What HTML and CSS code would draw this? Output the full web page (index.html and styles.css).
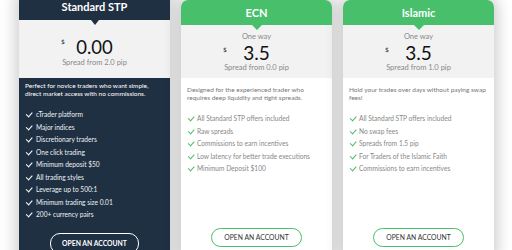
FILE: index.html
```html
<!DOCTYPE html>
<html lang="en">
<head>
    <meta charset="UTF-8">
    <meta name="viewport" content="width=device-width, initial-scale=1.0">
    <title>Account types</title>
    <link rel="stylesheet" href="styles.css">
</head>
<body>

    <div id="plans">

        <!-- featured plan -->
        <div class="plan featured">
            <div class="plan-head">Standard STP</div>
            <div class="plan-price">
                <div class="price">
                    <span class="currency">$</span>
                    <span class="amount">0.00</span>
                </div>
                <div class="spread">Spread from 2.0 pip</div>
            </div>
            <div class="plan-body">
                <p class="desc">Perfect for novice traders who want simple, direct market access with no commissions.</p>
                <ul class="features">
                    <li>cTrader platform</li>
                    <li>Major indices</li>
                    <li>Discretionary traders</li>
                    <li>One click trading</li>
                    <li>Minimum deposit $50</li>
                    <li>All trading styles</li>
                    <li>Leverage up to 500:1</li>
                    <li>Minimum trading size 0.01</li>
                    <li>200+ currency pairs</li>
                </ul>
                <a class="open-btn" href="#">OPEN AN ACCOUNT</a>
            </div>
        </div>

        <div class="plan">
            <div class="plan-head">ECN</div>
            <div class="plan-price">
                <div class="way">One way</div>
                <div class="price">
                    <span class="currency">$</span>
                    <span class="amount">3.5</span>
                </div>
                <div class="spread">Spread from 0.0 pip</div>
            </div>
            <div class="plan-body">
                <p class="desc">Designed for the experienced trader who requires deep liquidity and tight spreads.</p>
                <ul class="features">
                    <li>All Standard STP offers included</li>
                    <li>Raw spreads</li>
                    <li>Commissions to earn incentives</li>
                    <li>Low latency for better trade executions</li>
                    <li>Minimum Deposit $100</li>
                </ul>
                <a class="open-btn" href="#">OPEN AN ACCOUNT</a>
            </div>
        </div>

        <div class="plan">
            <div class="plan-head">Islamic</div>
            <div class="plan-price">
                <div class="way">One way</div>
                <div class="price">
                    <span class="currency">$</span>
                    <span class="amount">3.5</span>
                </div>
                <div class="spread">Spread from 1.0 pip</div>
            </div>
            <div class="plan-body">
                <p class="desc">Hold your trades over days without paying swap fees!</p>
                <ul class="features">
                    <li>All Standard STP offers included</li>
                    <li>No swap fees</li>
                    <li>Spreads from 1.5 pip</li>
                    <li>For Traders of the Islamic Faith</li>
                    <li>Commissions to earn incentives</li>
                </ul>
                <a class="open-btn" href="#">OPEN AN ACCOUNT</a>
            </div>
        </div>

    </div>

</body>
</html>
```

FILE: styles.css
```css
* {
    margin: 0px;
    padding: 0px;
    box-sizing: border-box;
}
html, body {
    width: 100%;
    height: 250px;
    overflow: hidden;
    background-color: white;
    font-family: 'Lato', sans-serif;
}
ul {
    list-style-type: none;
}
#plans {
    display: flex;
    align-items: flex-start;
    gap: 11px;
    padding-left: 19px;
}
.plan {
    width: 151px;
    background-color: white;
    box-shadow: 0 0 14px 4px rgba(0, 0, 0, 0.19);
    border-radius: 7px 7px 0 0;
    overflow: hidden;
}
.plan-head {
    position: relative;
    height: 25px;
    padding-top: 1px;
    line-height: 24px;
    background-color: #47bf6b;
    color: white;
    font-weight: bold;
    font-size: 11px;
    text-align: center;
}
.plan-head::after {
    content: '';
    position: absolute;
    left: 50%;
    bottom: -5px;
    margin-left: -5px;
    border-left: 5px solid transparent;
    border-right: 5px solid transparent;
    border-top: 5px solid #47bf6b;
    z-index: 1;
}
.plan-price {
    height: 53px;
    background-color: #f2f2f2;
    padding-top: 6px;
    text-align: center;
    color: #888;
    font-size: 7.5px;
}
.way {
    line-height: 11px;
}
.price {
    display: grid;
    grid-template-columns: 8px 1fr 8px;
    width: 67px;
    margin: 0 auto;
    height: 21px;
}
.currency {
    color: #222;
    font-size: 6.5px;
    line-height: 8px;
    padding-top: 4px;
    text-align: left;
}
.amount {
    color: #111;
    font-size: 19px;
    line-height: 21px;
}
.spread {
    line-height: 10px;
}
.plan-body {
    height: 177px;
    padding: 8px 6px 8px 6px;
    display: flex;
    flex-direction: column;
}
.desc {
    font-size: 6.5px;
    line-height: 8px;
    color: #777;
}
.features {
    margin-top: 10px;
}
.features li {
    line-height: 12.5px;
    font-size: 6.6px;
    color: #888;
    padding-left: 10px;
    position: relative;
}
.features li::before {
    content: '';
    position: absolute;
    left: 1px;
    top: 4px;
    width: 5px;
    height: 2.5px;
    border-left: 1.2px solid #4cbf6c;
    border-bottom: 1.2px solid #4cbf6c;
    transform: rotate(-48deg);
}
.open-btn {
    display: block;
    margin: auto auto 0 auto;
    width: 91px;
    height: 19px;
    line-height: 17px;
    border: 1px solid #47bf6b;
    border-radius: 10px;
    text-align: center;
    color: #333;
    font-size: 6.8px;
    text-decoration: none;
}

/* featured (dark) plan */
.featured {
    margin-top: -5px;
    border-radius: 0;
    background-color: #1f3043;
}
.featured .plan-head {
    background-color: #1f3043;
    padding-top: 0px;
}
.featured .plan-head::after {
    margin-left: -4px;
    border-left-width: 4px;
    border-right-width: 4px;
    border-top-color: #1f3043;
}
.featured .plan-price {
    height: 58px;
    padding-top: 18px;
}
.featured .plan-price .price {
    height: 19px;
}
.featured .amount {
    font-size: 18.5px;
    line-height: 19px;
}
.featured .currency {
    padding-top: 0px;
}
.featured .spread {
    margin-top: 1px;
    line-height: 9px;
}
.featured .plan-body {
    height: 185px;
    padding-top: 4px;
    padding-bottom: 9px;
}
.featured .desc {
    color: white;
}
.featured .features li {
    padding-left: 11px;
    color: #eef1f4;
}
.featured .features li::before {
    border-color: white;
    border-width: 1.6px;
}
.featured .open-btn {
    width: 89px;
    height: 21px;
    line-height: 18px;
    border: 1.5px solid white;
    color: white;
    font-weight: bold;
}
```
